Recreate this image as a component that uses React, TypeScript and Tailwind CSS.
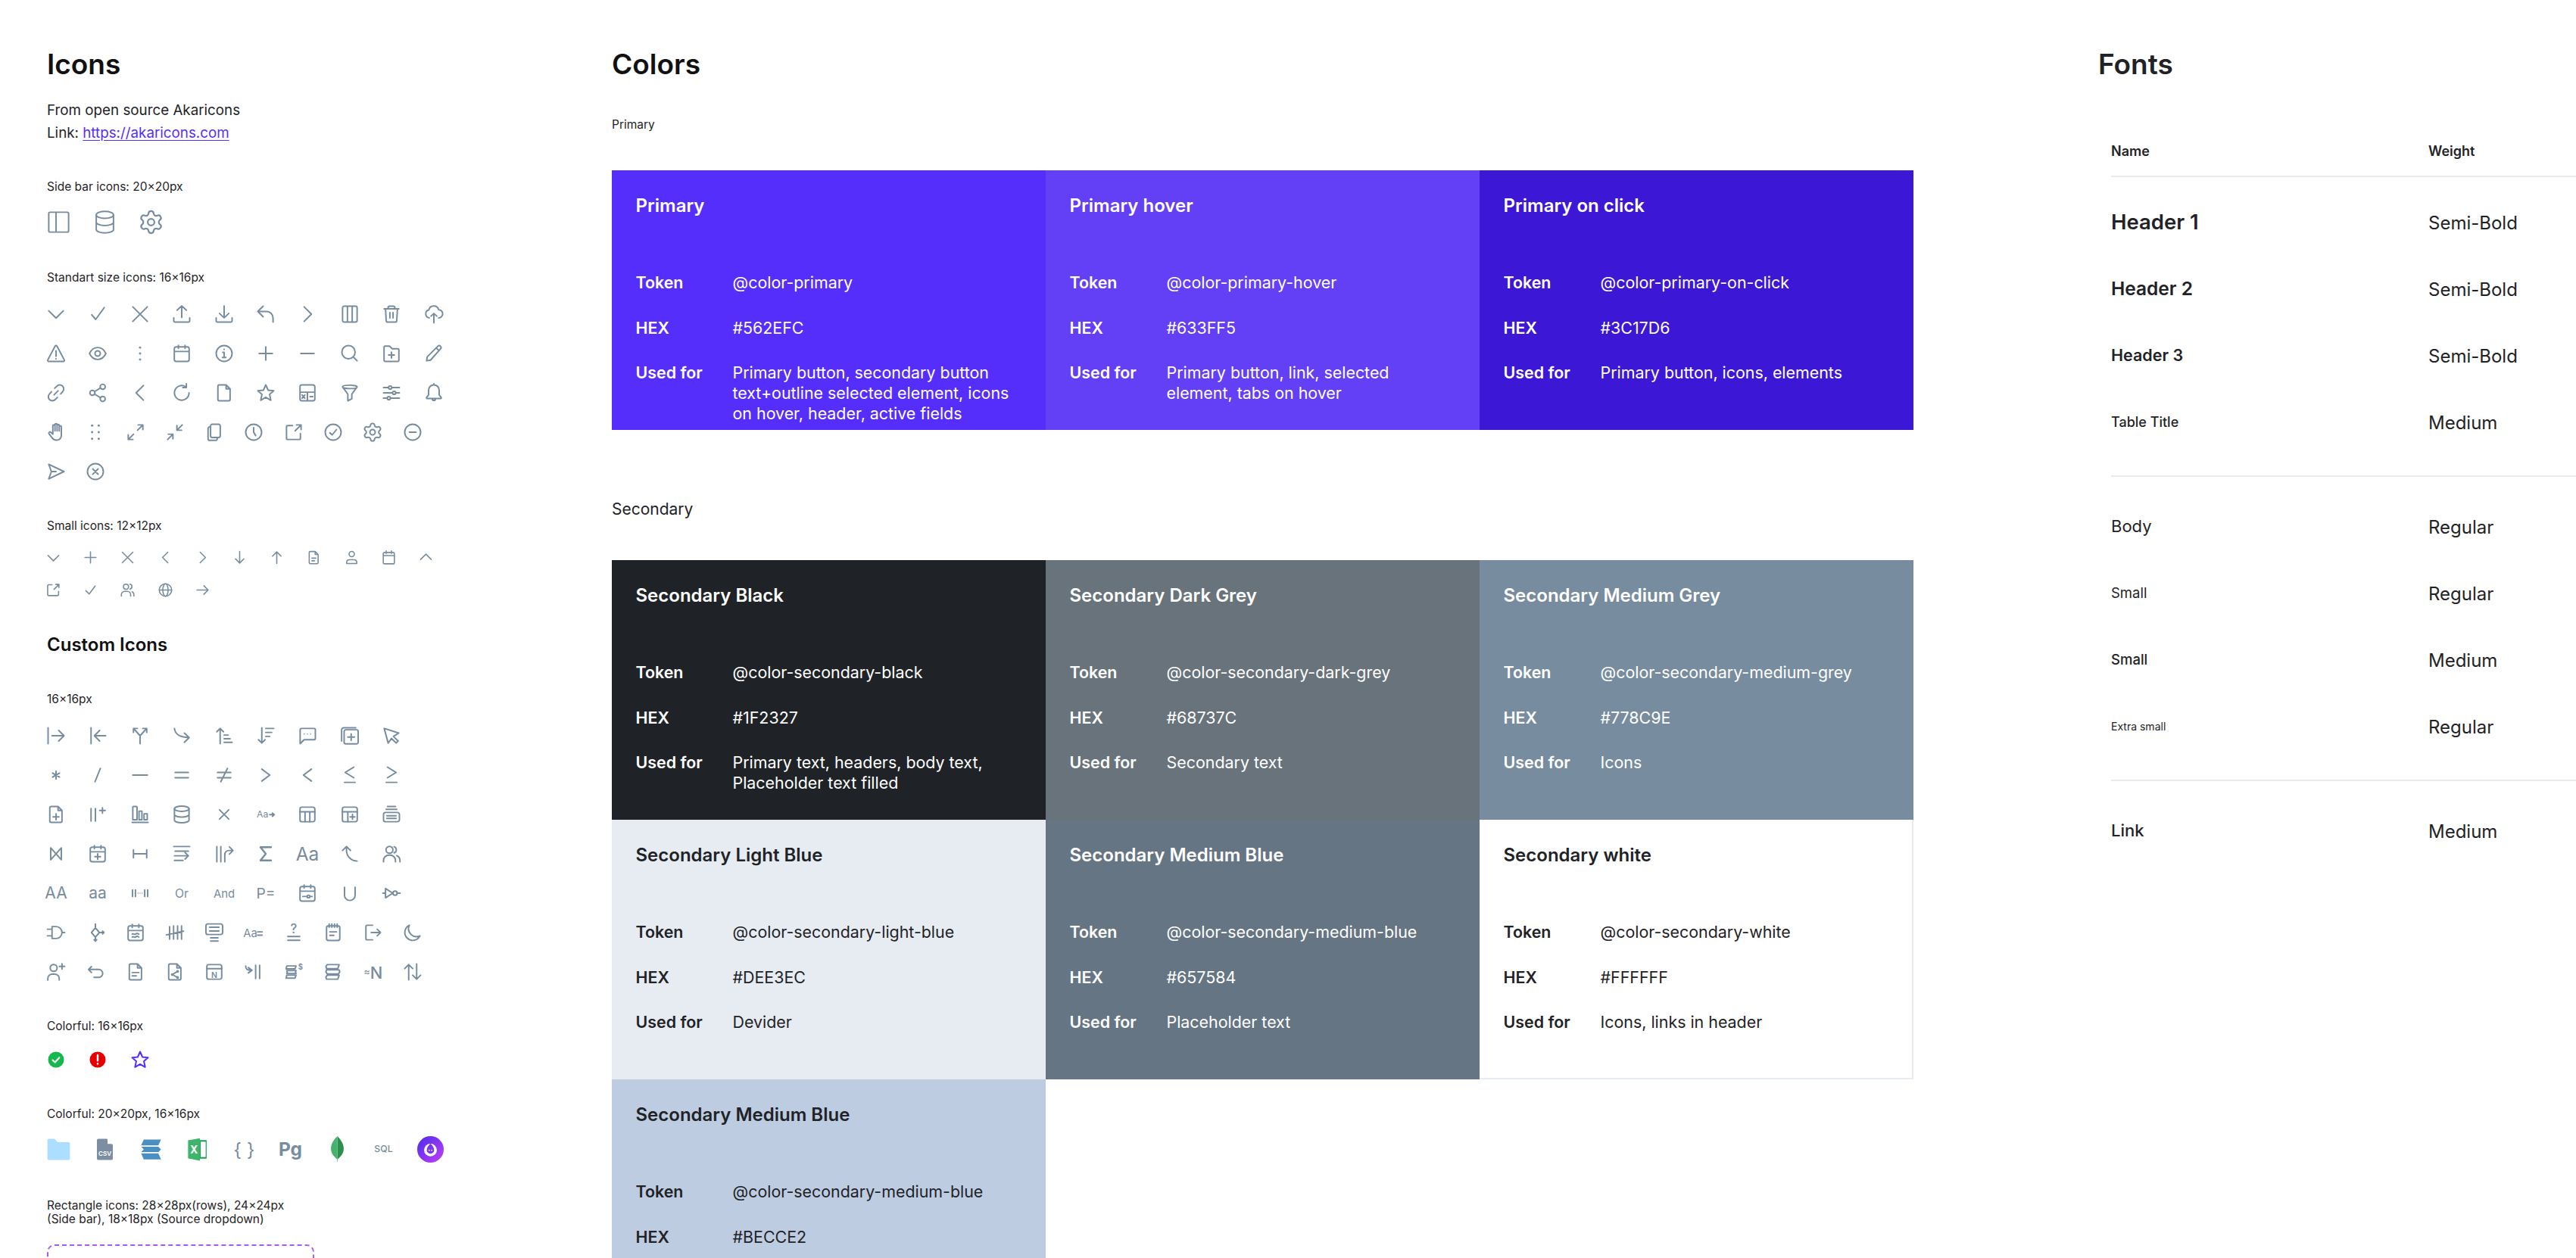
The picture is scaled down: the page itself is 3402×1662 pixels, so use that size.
import React from "react";
import { Settings } from "lucide-react";

type P = { children?: React.ReactNode; size?: number; vb?: number; sw?: number };
const S = ({ children, size = 28, vb = 16, sw = 1.12 }: P) => (
  <svg width={size} height={size} viewBox={`0 0 ${vb} ${vb}`} fill="none" stroke="currentColor" strokeWidth={sw} strokeLinecap="round" strokeLinejoin="round" className="shrink-0 overflow-visible text-[#778C9E]">
    {children}
  </svg>
);
const d = (path: string) => <path d={path} />;
const dot = (x: number, y: number, r = 0.85) => <circle cx={x} cy={y} r={r} fill="currentColor" stroke="none" />;
const T = ({ x = 8, y = 11, s = 8, w = 400, c }: { x?: number; y?: number; s?: number; w?: number; c: string }) => (
  <text x={x} y={y} fontSize={s} fontWeight={w} textAnchor="middle" fill="currentColor" stroke="none" fontFamily="Inter, sans-serif">{c}</text>
);

const calendar = d("M3.8 3h8.4a1.4 1.4 0 0 1 1.4 1.4v8.2a1.4 1.4 0 0 1-1.4 1.4H3.8a1.4 1.4 0 0 1-1.4-1.4V4.4A1.4 1.4 0 0 1 3.8 3ZM2.4 6.5h11.2M5.5 1.8v2.4M10.5 1.8v2.4");
const file = d("M4.3 2h5.2l3 3v8a1 1 0 0 1-1 1H4.3a1 1 0 0 1-1-1V3a1 1 0 0 1 1-1ZM9.5 2v3h3");
const tableBox = d("M3.8 2.5h8.4a1.4 1.4 0 0 1 1.4 1.4v8.2a1.4 1.4 0 0 1-1.4 1.4H3.8a1.4 1.4 0 0 1-1.4-1.4V3.9a1.4 1.4 0 0 1 1.4-1.4Z");
const circle = <circle cx="8" cy="8" r="6" />;
const stackBars = d("M3.5 2.5h9l-1 3H3l-.5-1.5ZM3 6.5h9.5l.5 1.5-1 1.5H3.5l-1-1.5ZM3.5 10.5h9l-1 3H3l-.5-1.5Z");

const std1 = [
  d("M2.5 5.5 8 11l5.5-5.5"), d("M3.5 8.5 6.5 12 13 3"), d("M2.5 2.5l11 11M13.5 2.5l-11 11"),
  d("M8 10.5V1.8M4.5 5 8 1.8 11.5 5M2 10.8v2.4a.8.8 0 0 0 .8.8h10.4a.8.8 0 0 0 .8-.8v-2.4"),
  d("M8 1.8v8.7M4.5 7.5 8 10.8l3.5-3.3M2 10.8v2.4a.8.8 0 0 0 .8.8h10.4a.8.8 0 0 0 .8-.8v-2.4"),
  d("M6 2 2 6l4 4M2 6h6.5a5 5 0 0 1 5 5v3"), d("M5.5 2.5 11 8l-5.5 5.5"),
  d("M3.8 2h8.4a1.3 1.3 0 0 1 1.3 1.3v9.4a1.3 1.3 0 0 1-1.3 1.3H3.8a1.3 1.3 0 0 1-1.3-1.3V3.3A1.3 1.3 0 0 1 3.8 2ZM6.2 2v12M9.8 2v12"),
  d("M2.5 4h11M5.5 4V3a1 1 0 0 1 1-1h3a1 1 0 0 1 1 1v1M3.5 4l.5 8.8A1.2 1.2 0 0 0 5.2 14h5.6a1.2 1.2 0 0 0 1.2-1.2l.5-8.8M6.8 6.8v4M9.2 6.8v4"),
  d("M4.5 10.8a3 3 0 0 1-.3-5.9 3.8 3.8 0 0 1 7.4-.2 3 3 0 0 1 0 6.1M8 14.5V7.5M5.8 9.5 8 7.5l2.2 2"),
];
const std2 = [
  d("M7.3 2.4a.8.8 0 0 1 1.4 0l5.5 10.4a.8.8 0 0 1-.7 1.2H2.5a.8.8 0 0 1-.7-1.2ZM8 6v4.2M8 12v.1"),
  <><path d="M1.8 8C3.5 4.5 6 3.5 8 3.5s4.5 1 6.2 4.5c-1.7 3.5-4.2 4.5-6.2 4.5S3.5 11.5 1.8 8Z" /><circle cx="8" cy="8" r="2" /></>,
  <>{dot(8, 3.5)}{dot(8, 8)}{dot(8, 12.5)}</>, calendar,
  <>{circle}{d("M7 7.2h1V11M6.7 11h2.6M8 4.9v.1")}</>,
  d("M8 3v10M3 8h10"), d("M3 8h10"),
  <><circle cx="7" cy="7" r="5" />{d("M11 11l2.5 2.5")}</>,
  d("M2.4 3.2a.8.8 0 0 1 .8-.8h3.3l2 2h4.3a.8.8 0 0 1 .8.8v8a.8.8 0 0 1-.8.8H3.2a.8.8 0 0 1-.8-.8ZM8 7v4.4M5.8 9.2h4.4"),
  d("M2.5 13.5 3 10.5l8-8a1.4 1.4 0 0 1 2 2L5.5 13ZM9.8 3.8l2 2"),
];
const std3 = [
  d("M6.5 9.5l3-3M7 4.5 8.6 3a3 3 0 0 1 4.4 4.1L11.5 8.8M9 11.5 7.4 13A3 3 0 0 1 3 8.9L4.5 7.2"),
  <><circle cx="11.8" cy="3.4" r="1.9" /><circle cx="4" cy="8" r="1.9" /><circle cx="11.8" cy="12.6" r="1.9" />{d("M5.7 7l4.4-2.6M5.7 9l4.4 2.6")}</>,
  d("M10.5 2.5 5 8l5.5 5.5"), d("M13.5 8a5.5 5.5 0 1 1-2.5-4.6M11.5 1.2V4H8.8"), file,
  d("M8 2l1.8 4 4.2.4-3.1 2.8.9 4.4L8 11.4l-3.8 2.2.9-4.4L2 6.4 6.2 6Z"),
  d("M3.8 2h8.4a1.4 1.4 0 0 1 1.4 1.4v9.2a1.4 1.4 0 0 1-1.4 1.4H3.8a1.4 1.4 0 0 1-1.4-1.4V3.4A1.4 1.4 0 0 1 3.8 2ZM2.4 7.5h11.2M8 7.5V14M4 9.6l2 2.4M6 9.6 4 12M10 10.8h2"),
  d("M2.5 3.5C2.5 1.8 13.5 1.8 13.5 3.5S2.5 5.2 2.5 3.5ZM2.5 3.5 6.5 9v5l3-1.5V9l4-5.5"),
  <>{d("M2 4h12M2 8h12M2 12h12")}<circle cx="7" cy="4" r="1.2" fill="#fff" /><circle cx="10" cy="8" r="1.2" fill="#fff" /><circle cx="6" cy="12" r="1.2" fill="#fff" /></>,
  d("M8 2a4 4 0 0 1 4 4v3.5l1.5 2a.5.5 0 0 1-.4.8H2.9a.5.5 0 0 1-.4-.8L4 9.5V6a4 4 0 0 1 4-4ZM6.8 12.5a1.2 1.2 0 0 0 2.4 0M8 1.2V2"),
];
const std4 = [
  d("M12 7V4a.8.8 0 0 0-1.6 0v3M10.4 7V3a.8.8 0 0 0-1.6 0v4M8.8 7V2.4a.8.8 0 0 0-1.6 0V7M7.2 7V3.2a.8.8 0 0 0-1.6 0v6.3L4 8a.9.9 0 0 0-1.3 1.2l2.3 3a4 4 0 0 0 3.2 1.8h.3a3.5 3.5 0 0 0 3.5-3.5V7"),
  <>{dot(5.5, 3)}{dot(10.5, 3)}{dot(5.5, 8)}{dot(10.5, 8)}{dot(5.5, 13)}{dot(10.5, 13)}</>,
  d("M9.5 6.5l4-4M10 2.5h3.5V6M6.5 9.5l-4 4M2.5 10v3.5H6"),
  d("M13.5 2.5l-4 4M9.5 3v3.5H13M2.5 13.5l4-4M3 9.5h3.5V13"),
  d("M6.5 2h4.7A1.3 1.3 0 0 1 12.5 3.3v7.4a1.3 1.3 0 0 1-1.3 1.3H6.5a1.3 1.3 0 0 1-1.3-1.3V3.3A1.3 1.3 0 0 1 6.5 2ZM5.2 4h-.7a1.2 1.2 0 0 0-1.2 1.2V13a1.2 1.2 0 0 0 1.2 1.2H9a1.2 1.2 0 0 0 1.2-1.2v-1"),
  <>{circle}{d("M8 4.5V8l1.5 2.5")}</>,
  d("M7 3H3.5a1 1 0 0 0-1 1v8.5a1 1 0 0 0 1 1H12a1 1 0 0 0 1-1V9M9 7l4.5-4.5M10 2.5h3.5V6"),
  <>{circle}{d("M5.5 8.5 7.3 10l3.2-4")}</>,
  "gear",
  <>{circle}{d("M5.5 8h5")}</>,
];
const std5 = [
  d("M2.5 2.5 14 8 2.5 13.5 4.5 8ZM4.5 8H8"),
  <>{circle}{d("M6 6l4 4M10 6l-4 4")}</>,
];
const small = [
  d("M2 4.5 6 8.5l4-4"), d("M6 1.8v8.4M1.8 6h8.4"), d("M2 2l8 8M10 2l-8 8"), d("M7.8 2 3.8 6l4 4"), d("M4.2 2l4 4-4 4"),
  d("M6 1.5V10M2.8 7 6 10.2 9.2 7"), d("M6 10.5V2M2.8 5 6 1.8 9.2 5"),
  d("M3.3 1.5h3.7l2.2 2.2v6.2a.8.8 0 0 1-.8.8H3.3a.8.8 0 0 1-.8-.8V2.3a.8.8 0 0 1 .8-.8ZM7 1.5v2.2h2.2M4.5 6.5h3M4.5 8.5h2"),
  <><circle cx="6" cy="3.4" r="2" />{d("M2.2 10.6V9.5a1.8 1.8 0 0 1 1.8-1.8h4a1.8 1.8 0 0 1 1.8 1.8v1.1H2.2Z")}</>,
  d("M2.8 2.2h6.4a1 1 0 0 1 1 1v6.6a1 1 0 0 1-1 1H2.8a1 1 0 0 1-1-1V3.2a1 1 0 0 1 1-1ZM1.8 4.6h8.4M4 1v2M8 1v2"),
  d("M2 7.5 6 3.5l4 4"),
];
const small2 = [
  d("M5 2H2.5a.8.8 0 0 0-.8.8v6.6a.8.8 0 0 0 .8.8h6.6a.8.8 0 0 0 .8-.8V7M6.5 5.5 10.2 1.8M7.8 1.8h2.4v2.4"),
  d("M2.5 6.5 5 9l4.5-6"),
  <><circle cx="4.8" cy="3.5" r="1.9" />{d("M1.3 10.5V9.5A2.5 2.5 0 0 1 3.8 7h2a2.5 2.5 0 0 1 2.5 2.5v1M7.8 1.6a1.9 1.9 0 0 1 0 3.7M9.4 7.3a2.5 2.5 0 0 1 1.4 2.2v1")}</>,
  <><circle cx="6" cy="6" r="4.7" /><ellipse cx="6" cy="6" rx="2" ry="4.7" />{d("M1.3 6h9.4")}</>,
  d("M1.8 6h8.2M7 2.8 10.2 6 7 9.2"),
];
const fileLines = <>{file}{d("M5.5 8.5h5M5.5 11h3")}</>;
const cust1 = [
  d("M2 2v12M5 8h8.5M10 4l4 4-4 4"), d("M3 2v12M14 8H6M9.5 4l-4 4 4 4"),
  d("M8 14V8M8 8 3.5 3M8 8l4.5-5M3 5.5v-3h3M10 2.5h3v3"),
  d("M2.5 2.5C3 6.5 5.5 9 13 9.3M10 6l3.6 3.4L10 13"),
  d("M5 14V2.5M2.5 5 5 2.5 7.5 5M8 7.5h3M8 10.3h4.5M8 13h6"),
  d("M5 2v11.5M2.5 11 5 13.5 7.5 11M8 2.5h6M8 5.5h4.5M8 8.5h3"),
  <>{d("M2.5 14V3.5a1 1 0 0 1 1-1H13a1 1 0 0 1 1 1V10a1 1 0 0 1-1 1H5.5Z")}{dot(5.5, 6.7, .45)}{dot(8, 6.7, .45)}{dot(10.5, 6.7, .45)}</>,
  d("M5 3.5h8A1.3 1.3 0 0 1 14.3 4.8v8A1.3 1.3 0 0 1 13 14.2H5a1.3 1.3 0 0 1-1.3-1.3v-8A1.3 1.3 0 0 1 5 3.5ZM12.5 2H3.4A1.6 1.6 0 0 0 1.8 3.6V12M9 6.5v5M6.5 9h5"),
  d("M2.5 2.5 13.5 6l-4 2.5 3.5 3.5-1.5 1.5L8 10l-2.5 3.5Z"),
];
const cust2 = [
  d("M8 5v6M5.4 6.5l5.2 3M10.6 6.5l-5.2 3"), d("M10 3 6 13"), d("M2.5 8h11"), d("M3 6h10M3 10h10"), d("M3 6h10M3 10h10M10.5 3l-5 10"),
  d("M5 3.5 11 8l-6 4.5"), d("M11 3.5 5 8l6 4.5"), d("M11 2 4.5 6 11 10M4 13.5h8"), d("M5 2l6.5 4L5 10M4 13.5h8"),
];
const cust3 = [
  <>{file}{d("M8 7.5v4.5M5.8 9.8h4.4")}</>,
  <>{d("M3 3.5V13M6.3 3.5V13M9.5 5h4.2M11.6 3v4")}</>,
  <>{d("M3 2h2.2a.5.5 0 0 1 .5.5V12H2.5V2.5A.5.5 0 0 1 3 2ZM7.2 5.5h2.2v6.5H7.2ZM11 7.5h2.4V12H11ZM2 14h12")}</>,
  <><ellipse cx="8" cy="3.7" rx="5.5" ry="2" />{d("M2.5 3.7v8.6c0 1.1 2.5 2 5.5 2s5.5-.9 5.5-2V3.7M2.5 8c0 1.1 2.5 2 5.5 2s5.5-.9 5.5-2")}</>,
  d("M4.5 4.5l7 7M11.5 4.5l-7 7"),
  <><T x={5.5} y={10.5} s={7} c="Aa" />{d("M11 8.2h3.4M13 7l1.4 1.2L13 9.4")}</>,
  <>{tableBox}{d("M2.4 6h11.2M6.2 6v7.5M9.8 6v7.5")}</>,
  <>{tableBox}{d("M2.4 6h11.2M6.5 6v7.5M10 8v3.6M8.2 9.8h3.6")}</>,
  d("M3.5 6.5h9A1.5 1.5 0 0 1 14 8v4a1.5 1.5 0 0 1-1.5 1.5h-9A1.5 1.5 0 0 1 2 12V8a1.5 1.5 0 0 1 1.5-1.5ZM5 2h6M4 4.2h8M4.5 9h7M4.5 11h7"),
];
const cust4 = [
  d("M4 3.5l8 9v-9l-8 9Z"),
  <>{calendar}{d("M8 8v4.2M5.9 10.1h4.2")}</>,
  d("M3 5v6M13 5v6M3 8h10"),
  d("M2 2.5h12M3 6h10M2.5 9.5H13M10.5 7 13 9.5 10.5 12M2.5 13H9"),
  d("M2.5 2.5V14M5.5 2.5V14M8.5 14V8.5a3 3 0 0 1 3-3h3M12 2.8l2.7 2.7L12 8.2"),
  <path d="M12 3H4l4 5-4 5h8" strokeWidth="1.4" />,
  <T y={13} s={14} c="Aa" />,
  d("M5.5 2.5V6a8 8 0 0 0 8 7.5M2.5 5.5l3-3 3 3"),
  <><circle cx="6.5" cy="5" r="2.6" />{d("M2 14v-1a4 4 0 0 1 4-4h1a4 4 0 0 1 4 4v1M10 2.6a2.5 2.5 0 0 1 0 4.7M12 9.4A4 4 0 0 1 14.4 13v1")}</>,
];
const cust5 = [
  <T y={12} s={12} c="AA" />, <T y={12} s={12} c="aa" />,
  <>{d("M2.3 5.5v5M4.5 5.5v5M11.5 5.5v5M13.7 5.5v5")}{dot(6.5, 8, .4)}{dot(8, 8, .4)}{dot(9.5, 8, .4)}</>,
  <T y={11.5} s={9} c="Or" />, <T y={11.5} s={8.5} c="And" />, <T y={12} s={11} c="P=" />,
  <>{calendar}{d("M4.5 10.5h7")}<circle cx="8.8" cy="10.5" r="1" fill="#fff" /></>,
  d("M4 3.5v6a4 4 0 0 0 8 0v-6"),
  <>{d("M1.5 8h2M3.5 4.5v7L9 8ZM12.3 8h2.2")}<circle cx="10.7" cy="8" r="1.6" /></>,
];
const cust6 = [
  d("M1.5 5.5H5M1.5 10.5H5M5 3.5h3a4.5 4.5 0 0 1 0 9H5ZM12.5 8h2"),
  d("M8 4.5 11 8l-3 3.5L5 8ZM8 1.5v3M8 11.5V14.5M7 13.4l1 1.1 1-1.1M11 8h3.5M13.4 7l1.1 1-1.1 1"),
  <>{calendar}{d("M5.5 9.2c1-.8 1.6.8 2.5 0s1.6-.6 2.5 0M5.5 11.4c1-.8 1.6.8 2.5 0s1.6-.6 2.5 0")}</>,
  d("M1.5 9.8 14.5 7M4 3.5V13M7 3V13M10 3V13M13 3v10"),
  d("M3.2 1.5h9.6A1.5 1.5 0 0 1 14.3 3v5a1.5 1.5 0 0 1-1.5 1.5H3.2A1.5 1.5 0 0 1 1.7 8V3a1.5 1.5 0 0 1 1.5-1.5ZM4.5 4h7M4.5 6.8h7M5.2 12h5.6M5.2 14.4h5.6"),
  <><T x={5.5} y={11.5} s={8.5} c="Aa" />{d("M11 7.5h3.4M11 10h3.4")}</>,
  <><T y={8.5} s={9.5} w={500} c="?" />{d("M3.5 11h9M3.5 13.8h9")}</>,
  d("M4.3 3h7.4A1.4 1.4 0 0 1 13 4.4v8.2A1.4 1.4 0 0 1 11.7 14H4.3A1.4 1.4 0 0 1 3 12.6V4.4A1.4 1.4 0 0 1 4.3 3ZM5 1.5V4M7 1.5V4M9 1.5V4M11 1.5V4M5.5 7.5h5M5.5 10.2h3"),
  d("M8 2.5H4a1 1 0 0 0-1 1v9a1 1 0 0 0 1 1h4M7 8h7M11.5 5.5 14 8l-2.5 2.5"),
  d("M13.5 10.5a6 6 0 0 1-8-8 6 6 0 1 0 8 8Z"),
];
const cust7 = [
  <><circle cx="6.2" cy="5" r="2.6" />{d("M1.8 14.2V13a3.3 3.3 0 0 1 3.3-3.3h2A3.3 3.3 0 0 1 10.4 13v1.2M12.5 1.8v4M10.5 3.8h4")}</>,
  d("M5 4 2.8 6.2 5 8.4M3 6.2h7.5a3 3 0 0 1 0 6H7"),
  fileLines,
  <>{file}<circle cx="10" cy="7.6" r=".5" /><circle cx="6" cy="10" r=".5" /><circle cx="10" cy="12.2" r=".5" />{d("M10 7.6 6 10l4 2.2")}</>,
  <>{tableBox}{d("M2.4 5.6h11.2")}<T y={12.3} s={6} w={600} c="N" /></>,
  d("M2 3.5c0 2.5 1 3.3 4.5 3.3M4 4.8l2.7 2-2.7 2M9.5 3v10M12.5 3v10"),
  <>{d("M2.7 3.5h7l-.8 2.2H2.2ZM2.7 7h7l-.4 1.2.4 1.1h-7l.4-1.1ZM2.7 10.5h7l-.8 2.2H2.2Z")}<T x={13} y={6} s={5.5} w={600} c="$" /></>,
  stackBars,
  <><T x={3.8} y={10.5} s={7} w={500} c="≈" /><T x={10.8} y={13} s={12.5} w={500} c="N" /></>,
  d("M5 14V2.5M2 5.5l3-3 3 3M11 2v11.5M8 10.5l3 3 3-3"),
];

const Row = ({ items, gap = "gap-[27.4px]" }: { items: any[]; gap?: string }) => (
  <div className={`flex ${gap}`}>
    {items.map((it, i) =>
      it === "gear" ? (
        <Settings key={i} size={28} strokeWidth={1.65} className="shrink-0 text-[#778C9E]" />
      ) : (
        <S key={i}>{it}</S>
      )
    )}
  </div>
);
const SmallRow = ({ items }: { items: any[] }) => (
  <div className="flex gap-[28.2px]">
    {items.map((it, i) => (
      <S key={i} size={21} vb={12} sw={0.9}>{it}</S>
    ))}
  </div>
);

const Label = ({ children, className = "" }: { children: React.ReactNode; className?: string }) => (
  <div className={`text-[15.5px] leading-[24px] text-[#1F2327] ${className}`}>{children}</div>
);

function IconsColumn() {
  return (
    <div className="w-[808px] shrink-0 pl-[62px] pt-[61px]">
      <h1 className="text-[37px] leading-[48px] font-semibold text-[#111]">Icons</h1>
      <div className="mt-[22px] text-[18.8px] leading-[30px] text-[#1F2327]">
        <div>From open source Akaricons</div>
        <div>Link: <span className="text-[#562EFC] underline underline-offset-[3px]">https://akaricons.com</span></div>
      </div>
      <Label className="mt-[44px]">Side bar icons: 20×20px</Label>
      <div className="mt-[17px] -ml-[2.5px] flex gap-[26.4px]">
        <S size={35} vb={20}><path d="M3.5 2.5h13a1 1 0 0 1 1 1v13a1 1 0 0 1-1 1h-13a1 1 0 0 1-1-1v-13a1 1 0 0 1 1-1ZM8 2.5v15" /></S>
        <S size={35} vb={20}><ellipse cx="10" cy="4.5" rx="6.5" ry="2.6" /><path d="M3.5 4.5v11c0 1.4 2.9 2.6 6.5 2.6s6.5-1.2 6.5-2.6v-11M3.5 10c0 1.4 2.9 2.6 6.5 2.6s6.5-1.2 6.5-2.6" /></S>
        <Settings size={35} strokeWidth={1.5} className="shrink-0 text-[#778C9E]" />
      </div>
      <Label className="mt-[44px]">Standart size icons: 16×16px</Label>
      <div className="mt-[22px] -ml-[2px] flex flex-col gap-[24px]">
        <Row items={std1} />
        <Row items={std2} />
        <Row items={std3} />
        <Row items={std4} gap="gap-[24.3px]" />
        <Row items={std5} gap="gap-[24.3px]" />
      </div>
      <Label className="mt-[46px]">Small icons: 12×12px</Label>
      <div className="mt-[19px] -ml-[2px] flex flex-col gap-[22px]">
        <SmallRow items={small} />
        <SmallRow items={small2} />
      </div>
      <h2 className="mt-[46px] text-[24px] leading-[32px] font-semibold text-[#111]">Custom Icons</h2>
      <Label className="mt-[44px]">16×16px</Label>
      <div className="mt-[22px] -ml-[2px] flex flex-col gap-[24px]">
        <Row items={cust1} />
        <Row items={cust2} />
        <Row items={cust3} />
        <Row items={cust4} />
        <Row items={cust5} />
        <Row items={cust6} gap="gap-[24.3px]" />
        <Row items={cust7} gap="gap-[24.3px]" />
      </div>
      <Label className="mt-[46px]">Colorful: 16×16px</Label>
      <div className="mt-[18px] -ml-[2px] flex gap-[27.4px]">
        <svg width="28" height="28" viewBox="0 0 16 16"><circle cx="8" cy="8" r="6" fill="#16B84E" /><path d="M5.5 8.3 7.2 10l3.3-3.6" fill="none" stroke="#fff" strokeWidth="1.2" strokeLinecap="round" strokeLinejoin="round" /></svg>
        <svg width="28" height="28" viewBox="0 0 16 16"><circle cx="8" cy="8" r="6" fill="#E60000" /><path d="M8 4.5v4.2M8 11v.2" stroke="#fff" strokeWidth="1.4" strokeLinecap="round" /></svg>
        <svg width="28" height="28" viewBox="0 0 16 16" fill="none" stroke="#562EFC" strokeWidth="1.15" strokeLinejoin="round"><path d="M8 2l1.8 4 4.2.4-3.1 2.8.9 4.4L8 11.4l-3.8 2.2.9-4.4L2 6.4 6.2 6Z" /></svg>
      </div>
      <Label className="mt-[46px]">Colorful: 20×20px, 16×16px</Label>
      <div className="mt-[17px] -ml-[2.5px] flex gap-[26.4px]">
        <svg width="35" height="35" viewBox="0 0 20 20"><path d="M1.5 3a1 1 0 0 1 1-1h4.3l2.4 2.6h8.3a1 1 0 0 1 1 1V17a1 1 0 0 1-1 1h-15a1 1 0 0 1-1-1Z" fill="#ACDFFF" /></svg>
        <svg width="35" height="35" viewBox="0 0 20 20"><path d="M5 2h6.5L16 6.5V17a1 1 0 0 1-1 1H5a1 1 0 0 1-1-1V3a1 1 0 0 1 1-1Z" fill="#7D8EA3" /><path d="M12 1.8 16 5.8h-4Z" fill="#fff" /><text x="10" y="15" fontSize="4.6" fontWeight="600" textAnchor="middle" fill="#fff" fontFamily="Inter, sans-serif">CSV</text></svg>
        <svg width="35" height="35" viewBox="0 0 20 20" fill="#4A8FC4"><path d="M4.5 2.5h13L15.5 7H2.5ZM2.5 8h13l2 2-2 2H2.5l2-2ZM2.5 13h13l2 4.5h-13Z" /></svg>
        <svg width="35" height="35" viewBox="0 0 20 20"><path d="M10 3h6.5v14H10Z" fill="#1F9D58" /><path d="M2.5 3.2 11.5 1.5v17L2.5 16.8Z" fill="#3EB56B" /><path d="M12 4.2h3.8v11.6H12Z" fill="#fff" /><text x="7" y="13" fontSize="8" fontWeight="700" textAnchor="middle" fill="#fff" fontFamily="Inter, sans-serif">X</text></svg>
        <svg width="35" height="35" viewBox="0 0 20 20"><text x="10" y="15.5" fontSize="14" textAnchor="middle" fill="#778C9E" fontFamily="Inter, sans-serif">{"{ }"}</text></svg>
        <svg width="35" height="35" viewBox="0 0 20 20"><text x="10" y="15" fontSize="14" fontWeight="700" textAnchor="middle" fill="#778C9E" fontFamily="Inter, sans-serif">Pg</text></svg>
        <svg width="35" height="35" viewBox="0 0 20 20"><path d="M10 0c3 3 4.8 6 4.8 9.5S12.5 15.5 10.3 17.4L10 20Z" fill="#2B8F50" /><path d="M10 0C7 3 5.2 6 5.2 9.5S7.5 15.5 9.7 17.4L10 20Z" fill="#45B36B" /></svg>
        <svg width="35" height="35" viewBox="0 0 20 20"><text x="10" y="12" fontSize="7" fontWeight="500" textAnchor="middle" fill="#778C9E" fontFamily="Inter, sans-serif">SQL</text></svg>
        <svg width="35" height="35" viewBox="0 0 20 20"><defs><linearGradient id="pg" x1="0" y1="0" x2="1" y2="1"><stop offset="0" stopColor="#4A2BEF" /><stop offset="1" stopColor="#C23FF5" /></linearGradient></defs><circle cx="10" cy="10" r="10" fill="url(#pg)" /><circle cx="10" cy="10.5" r="4.8" fill="#fff" /><path d="M10 5.5c1.4 1.6 2.8 3 2.8 5a2.8 2.8 0 0 1-5.6 0c0-2 1.4-3.4 2.8-5Z" fill="#7A35F2" /><circle cx="9" cy="10.7" r=".5" fill="#fff" /><circle cx="11" cy="10.7" r=".5" fill="#fff" /></svg>
      </div>
      <Label className="mt-[48px] !leading-[18px]">Rectangle icons: 28×28px(rows), 24×24px<br />(Side bar), 18×18px (Source dropdown)</Label>
      <div className="mt-[24px] h-[200px] w-[353px] rounded-[10px] border-2 border-dashed border-[#A45CF0]" />
    </div>
  );
}

type Card = { title: string; token: string; hex: string; used?: string; bg: string; text: string; border?: string };

const ColorCard = ({ c }: { c: Card }) => (
  <div className={`h-[343px] pl-[31.5px] pt-[31px] ${c.bg} ${c.text} ${c.border ?? ""}`}>
    <div className="text-[24px] leading-[32px] font-semibold">{c.title}</div>
    <div className="mt-[72px] flex flex-col gap-[32.5px] text-[21.4px] leading-[27px]">
      <div className="flex"><div className="w-[128px] shrink-0 font-semibold">Token</div><div>{c.token}</div></div>
      <div className="flex"><div className="w-[128px] shrink-0 font-semibold">HEX</div><div>{c.hex}</div></div>
      {c.used && <div className="flex"><div className="w-[128px] shrink-0 font-semibold">Used for</div><div className="w-[380px]">{c.used}</div></div>}
    </div>
  </div>
);

const primary: Card[] = [
  { title: "Primary", token: "@color-primary", hex: "#562EFC", used: "Primary button, secondary button text+outline selected element, icons on hover, header, active fields", bg: "bg-[#562EFC]", text: "text-white" },
  { title: "Primary hover", token: "@color-primary-hover", hex: "#633FF5", used: "Primary button, link, selected element, tabs on hover", bg: "bg-[#633FF5]", text: "text-white" },
  { title: "Primary on click", token: "@color-primary-on-click", hex: "#3C17D6", used: "Primary button, icons, elements", bg: "bg-[#3C17D6]", text: "text-white" },
];
const secondary: Card[] = [
  { title: "Secondary Black", token: "@color-secondary-black", hex: "#1F2327", used: "Primary text, headers, body text, Placeholder text filled", bg: "bg-[#1F2327]", text: "text-white" },
  { title: "Secondary Dark Grey", token: "@color-secondary-dark-grey", hex: "#68737C", used: "Secondary text", bg: "bg-[#68737C]", text: "text-white" },
  { title: "Secondary Medium Grey", token: "@color-secondary-medium-grey", hex: "#778C9E", used: "Icons", bg: "bg-[#778C9E]", text: "text-white" },
  { title: "Secondary Light Blue", token: "@color-secondary-light-blue", hex: "#DEE3EC", used: "Devider", bg: "bg-[#E7ECF3]", text: "text-[#1F2327]" },
  { title: "Secondary Medium Blue", token: "@color-secondary-medium-blue", hex: "#657584", used: "Placeholder text", bg: "bg-[#657584]", text: "text-white" },
  { title: "Secondary white", token: "@color-secondary-white", hex: "#FFFFFF", used: "Icons, links in header", bg: "bg-white", text: "text-[#1F2327]", border: "border-r-2 border-b-2 border-[#E7ECF3]" },
  { title: "Secondary Medium Blue", token: "@color-secondary-medium-blue", hex: "#BECCE2", bg: "bg-[#BECCE2]", text: "text-[#1F2327]" },
];

function ColorsColumn() {
  return (
    <div className="w-[1963px] shrink-0 pt-[61px]">
      <h1 className="text-[37px] leading-[48px] font-semibold text-[#111]">Colors</h1>
      <Label className="mt-[44px]">Primary</Label>
      <div className="mt-[48px] grid w-[1719px] grid-cols-3">
        {primary.map((c) => <ColorCard key={c.title} c={c} />)}
      </div>
      <div className="mt-[90px] text-[21px] leading-[30px] text-[#1F2327]">Secondary</div>
      <div className="mt-[52px] grid w-[1719px] grid-cols-3">
        {secondary.map((c, i) => <ColorCard key={i} c={c} />)}
      </div>
    </div>
  );
}

const FontRow = ({ name, cls, weight }: { name: string; cls: string; weight: string }) => (
  <div className="flex h-[88px] items-center">
    <div className={`mb-[3px] w-[419px] shrink-0 text-[#1F2327] ${cls}`}>{name}</div>
    <div className="text-[24px] text-[#1F2327]">{weight}</div>
  </div>
);

function FontsColumn() {
  return (
    <div className="min-w-0 flex-1 pt-[61px]">
      <h1 className="text-[37px] leading-[48px] font-semibold text-[#1F2327]">Fonts</h1>
      <div className="ml-[17px] mt-[78px] flex h-[24px] items-center text-[18px] font-semibold text-[#1F2327]">
        <div className="w-[419px]">Name</div>
        <div>Weight</div>
      </div>
      <div className="ml-[17px] mt-[21px] h-[2px] bg-[#E7ECF1]" />
      <div className="ml-[17px] mt-[17px]">
        <FontRow name="Header 1" cls="text-[27.5px] font-semibold" weight="Semi-Bold" />
        <FontRow name="Header 2" cls="text-[24.5px] font-semibold" weight="Semi-Bold" />
        <FontRow name="Header 3" cls="text-[21.5px] font-semibold" weight="Semi-Bold" />
        <FontRow name="Table Title" cls="text-[18px] font-medium" weight="Medium" />
      </div>
      <div className="ml-[17px] mt-[25px] h-[2px] bg-[#E7ECF1]" />
      <div className="ml-[17px] mt-[23px]">
        <FontRow name="Body" cls="text-[22px]" weight="Regular" />
        <FontRow name="Small" cls="text-[18.5px]" weight="Regular" />
        <FontRow name="Small" cls="text-[18.5px] font-medium" weight="Medium" />
        <FontRow name="Extra small" cls="text-[14px]" weight="Regular" />
      </div>
      <div className="ml-[17px] mt-[25px] h-[2px] bg-[#E7ECF1]" />
      <div className="ml-[17px] mt-[23px]">
        <FontRow name="Link" cls="text-[22px] font-medium" weight="Medium" />
      </div>
    </div>
  );
}

export default function App() {
  return (
    <div className="flex h-[1662px] w-[3402px] overflow-hidden bg-white font-['Inter',sans-serif]">
      <IconsColumn />
      <ColorsColumn />
      <FontsColumn />
    </div>
  );
}
